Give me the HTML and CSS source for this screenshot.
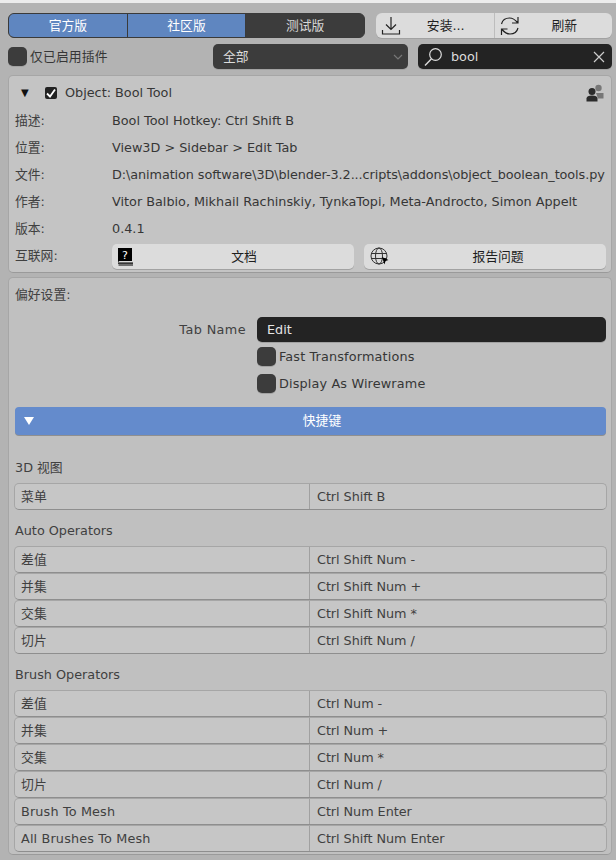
FILE: index.html
```html
<!DOCTYPE html>
<html lang="zh">
<head>
  <meta charset="UTF-8">
  <title>Add-ons</title>
  <link rel="stylesheet" href="styles.css">
</head>
<body>

  <!-- TOP BAR -->
  <div class="topbar">
    <div class="tabs">
      <div class="tab active">官方版</div>
      <div class="tab active">社区版</div>
      <div class="tab">测试版</div>
    </div>
    <div class="actions">
      <div class="action">
        <svg class="action-icon" viewBox="0 0 20 20" width="20" height="20"><path d="M10 1v12M5 8.500l5 5 5-5M1.500 14v4h17v-4" fill="none" stroke="#222" stroke-width="1.200"/></svg>
        <span>安装...</span>
      </div>
      <div class="action">
        <svg class="action-icon" viewBox="0 0 20 20" width="20" height="20"><path d="M1.500 8C2.500 4 5.500 2 9.500 2c3 0 5.500 1.500 8 4.500M18 1v6h-6M18 12c-1 4-4 6-8 6-3 0-5.500-1.500-8-4.500M1.500 19v-6h6" fill="none" stroke="#222" stroke-width="1.200"/></svg>
        <span>刷新</span>
      </div>
    </div>
  </div>

  <!-- FILTER ROW -->
  <div class="filters">
    <label class="check-row enabled-only"><span class="check"></span>仅已启用插件</label>
    <div class="dropdown">
      <span>全部</span>
      <svg viewBox="0 0 10 6" width="10" height="6"><path d="M1 1l4 4 4-4" fill="none" stroke="#777" stroke-width="1.200"/></svg>
    </div>
    <div class="search">
      <svg viewBox="0 0 20 20" width="20" height="20"><circle cx="12.500" cy="7.500" r="5.800" fill="none" stroke="#ddd" stroke-width="1.200"/><path d="M8.500 11.800L2 18.500" stroke="#ddd" stroke-width="1.400"/></svg>
      <span class="search-text">bool</span>
      <svg viewBox="0 0 12 12" width="12" height="12"><path d="M1 1l10 10M11 1L1 11" stroke="#ccc" stroke-width="1.200"/></svg>
    </div>
  </div>

  <!-- ADDON INFO -->
  <div class="panel info">
    <div class="addon-head">
      <span class="arrow">▼</span>
      <span class="tick"><svg viewBox="0 0 12 12" width="12" height="12"><path d="M2 6.500l3 3 5-7" fill="none" stroke="#fff" stroke-width="1.800"/></svg></span>
      <span class="addon-name">Object: Bool Tool</span>
      <svg class="people" viewBox="0 0 18 18" width="18" height="18"><circle cx="12.500" cy="4" r="3.200" fill="#777"/><path d="M10 9h7.500v5.500h-5.500z" fill="#777"/><circle cx="6" cy="7.500" r="3.500" fill="#2b2b2b"/><path d="M0.500 17.500v-3c0-2 2-3 5.500-3s5.500 1 5.500 3v3z" fill="#2b2b2b"/></svg>
    </div>
    <div class="info-row"><span class="info-label">描述:</span><span>Bool Tool Hotkey: Ctrl Shift B</span></div>
    <div class="info-row"><span class="info-label">位置:</span><span>View3D &gt; Sidebar &gt; Edit Tab</span></div>
    <div class="info-row"><span class="info-label">文件:</span><span class="file-path">D:\animation software\3D\blender-3.2...cripts\addons\object_boolean_tools.py</span></div>
    <div class="info-row"><span class="info-label">作者:</span><span>Vitor Balbio, Mikhail Rachinskiy, TynkaTopi, Meta-Androcto, Simon Appelt</span></div>
    <div class="info-row"><span class="info-label">版本:</span><span>0.4.1</span></div>
    <div class="info-row links">
      <span class="info-label">互联网:</span>
      <div class="link-btn">
        <svg viewBox="0 0 16 18" width="16" height="18"><path d="M1 0h14v13H3.500C2 13 1 13.600 1 14.500z" fill="#000"/><path d="M1 15.200h15M1.500 17h14.500" stroke="#000" stroke-width="1.200"/><text x="8" y="10.500" class="book-mark">?</text></svg>
        <span>文档</span>
      </div>
      <div class="link-btn">
        <svg viewBox="0 0 20 20" width="20" height="20"><g fill="none" stroke="#333" stroke-width="1"><circle cx="10" cy="9" r="8"/><ellipse cx="10" cy="9" rx="3.500" ry="8"/><path d="M2 6.500h16M2 11.500h16"/></g><path d="M13 10l6.500 3-3 1-1 3.500z" fill="#000"/></svg>
        <span>报告问题</span>
      </div>
    </div>
  </div>

  <!-- PREFERENCES -->
  <div class="panel prefs">
    <div class="prefs-title">偏好设置:</div>
    <div class="prop-row">
      <span class="prop-label">Tab Name</span>
      <div class="text-field">Edit</div>
    </div>
    <div class="prop-row">
      <span class="prop-label"></span>
      <label class="check-row"><span class="check"></span>Fast Transformations</label>
    </div>
    <div class="prop-row">
      <span class="prop-label"></span>
      <label class="check-row"><span class="check"></span>Display As Wirewrame</label>
    </div>

    <div class="hotkey-bar">
      <svg viewBox="0 0 10 8" width="10" height="8"><path d="M0 0h10L5 8z" fill="#fff"/></svg>
      <span>快捷键</span>
    </div>

    <div class="group-title first">3D 视图</div>
    <div class="keys">
      <div class="key-row"><span>菜单</span><span>Ctrl Shift B</span></div>
    </div>

    <div class="group-title">Auto Operators</div>
    <div class="keys">
      <div class="key-row"><span>差值</span><span>Ctrl Shift Num -</span></div>
      <div class="key-row"><span>并集</span><span>Ctrl Shift Num +</span></div>
      <div class="key-row"><span>交集</span><span>Ctrl Shift Num *</span></div>
      <div class="key-row"><span>切片</span><span>Ctrl Shift Num /</span></div>
    </div>

    <div class="group-title">Brush Operators</div>
    <div class="keys">
      <div class="key-row"><span>差值</span><span>Ctrl Num -</span></div>
      <div class="key-row"><span>并集</span><span>Ctrl Num +</span></div>
      <div class="key-row"><span>交集</span><span>Ctrl Num *</span></div>
      <div class="key-row"><span>切片</span><span>Ctrl Num /</span></div>
      <div class="key-row"><span>Brush To Mesh</span><span>Ctrl Num Enter</span></div>
      <div class="key-row"><span>All Brushes To Mesh</span><span>Ctrl Shift Num Enter</span></div>
    </div>
  </div>

</body>
</html>
```

FILE: styles.css
```css
html, body {
  height: 860px;
  overflow: hidden;
}
body {
  margin: 0;
  padding: 13px 4px 0 8px;
  background: linear-gradient(#ececec 0, #ececec 3px, #b3b3b3 3px);
  color: #363636;
  font-family: "DejaVu Sans", "Noto Sans CJK SC", sans-serif;
  font-size: 12.800px;
  line-height: 1.2;
  box-sizing: border-box;
}
svg { flex: none; display: block; }

.topbar {
  display: flex;
  justify-content: space-between;
  height: 25px;
}
.tabs {
  display: flex;
  width: 357px;
  border-radius: 6px;
  overflow: hidden;
  border: 1px solid #3a3a3a;
  box-sizing: border-box;
  background: #3c3c3c;
}
.tab {
  flex: 1;
  color: #d8d8d8;
  text-align: center;
  line-height: 23px;
}
.tab.active {
  background: #5f86c0;
  color: #fff;
  border-right: 1px solid #3a3a3a;
}
.actions {
  display: flex;
  width: 236px;
  border-radius: 6px;
  overflow: hidden;
  background: #dcdcdc;
  box-shadow: 0 1px 0 #a2a2a2;
}
.action {
  flex: 1;
  display: flex;
  align-items: center;
  padding-left: 5px;
  color: #1e1e1e;
}
.action + .action { border-left: 1px solid #bdbdbd; }
.action span {
  flex: 1;
  text-align: center;
  padding-right: 3px;
}

.filters {
  display: flex;
  align-items: center;
  margin-top: 6px;
  height: 25px;
}
.check-row {
  display: flex;
  align-items: center;
  gap: 3px;
  white-space: nowrap;
  letter-spacing: 0.150px;
}
.check {
  width: 19px;
  height: 19px;
  border-radius: 5px;
  background: #3c3c3c;
  box-shadow: 0 1px 0 #a2a2a2;
}
.enabled-only { width: 205px; }
.dropdown {
  width: 195px;
  height: 25px;
  display: flex;
  align-items: center;
  justify-content: space-between;
  padding: 0 5px 0 10px;
  box-sizing: border-box;
  border-radius: 5px;
  background: #3c3c3c;
  color: #dcdcdc;
  box-shadow: 0 1px 0 #a2a2a2;
}
.search {
  width: 194px;
  height: 25px;
  margin-left: 10px;
  display: flex;
  align-items: center;
  padding: 0 7px 0 5px;
  box-sizing: border-box;
  border-radius: 5px;
  background: #232323;
  color: #dcdcdc;
  box-shadow: 0 1px 0 #a2a2a2;
}
.search-text {
  flex: 1;
  margin-left: 8px;
}

.panel {
  border: 1px solid #a6a6a6;
  border-bottom-color: #9a9a9a;
  border-radius: 5px;
  background: #c0c0c0;
  box-sizing: border-box;
  width: 604px;
  padding: 0 5px 0 6px;
}
.info {
  margin-top: 6px;
  height: 198px;
  background: #c4c4c4;
}
.addon-head {
  display: flex;
  align-items: center;
  height: 31px;
  padding-top: 3px;
  box-sizing: border-box;
}
.arrow {
  width: 30px;
  padding-left: 6px;
  box-sizing: border-box;
  font-size: 10px;
  color: #111;
}
.tick {
  width: 12px;
  height: 12px;
  background: #222;
  border-radius: 2px;
  margin-right: 8px;
}
.addon-name { flex: 1; }
.people { margin-right: 2px; }
.info-row {
  display: flex;
  align-items: center;
  height: 27px;
  white-space: nowrap;
}
.info-label {
  width: 97px;
  flex: none;
  color: #404040;
}
.file-path { letter-spacing: -0.080px; }
.links { gap: 10px; }
.links .info-label { width: 87px; }
.link-btn {
  flex: 1;
  height: 25px;
  margin-top: 2px;
  display: flex;
  align-items: center;
  padding: 0 5px;
  box-sizing: border-box;
  border-radius: 5px;
  background: #dcdcdc;
  color: #1e1e1e;
  box-shadow: 0 1px 0 #a2a2a2;
}
.link-btn span {
  flex: 1;
  text-align: center;
  padding-left: 6px;
}
.book-mark {
  fill: #fff;
  font-size: 11px;
  text-anchor: middle;
  font-family: "DejaVu Sans", sans-serif;
}

.prefs {
  margin-top: 4px;
  height: 578px;
}
.prefs-title {
  height: 38px;
  line-height: 33px;
  color: #404040;
}
.prop-row {
  display: flex;
  align-items: center;
  height: 27px;
}
.prop-label {
  width: 242px;
  flex: none;
  padding-right: 11px;
  box-sizing: border-box;
  text-align: right;
  letter-spacing: 0.400px;
  color: #404040;
}
.text-field {
  flex: 1;
  height: 25px;
  line-height: 25px;
  padding-left: 10px;
  border-radius: 5px;
  background: #232323;
  color: #e4e4e4;
  box-shadow: 0 1px 0 #a2a2a2;
}
.hotkey-bar {
  height: 28px;
  margin-top: 10px;
  display: flex;
  align-items: center;
  padding-left: 9px;
  border-radius: 4px;
  background: #648bcc;
  color: #fff;
  box-shadow: 0 1px 0 #8f8f8f;
}
.hotkey-bar span {
  flex: 1;
  text-align: center;
  padding-left: 4px;
}
.group-title {
  height: 20px;
  line-height: 21px;
  margin-top: 10px;
  margin-bottom: 6px;
  color: #404040;
}
.group-title.first { margin-top: 22px; }
.keys {
  display: flex;
  flex-direction: column;
  margin: 0 -1px;
}
.key-row {
  display: grid;
  grid-template-columns: 294px 1fr;
  height: 27px;
  line-height: 25px;
  border: 1px solid #a6a6a6;
  border-bottom-color: #8e8e8e;
  border-radius: 5px;
  box-sizing: border-box;
  background: #c6c6c6;
  color: #404040;
}
.key-row span {
  padding-left: 6px;
  letter-spacing: 0.150px;
}
.key-row span + span {
  border-left: 1px solid #a0a0a0;
  padding-left: 7px;
  letter-spacing: -0.050px;
}
```
